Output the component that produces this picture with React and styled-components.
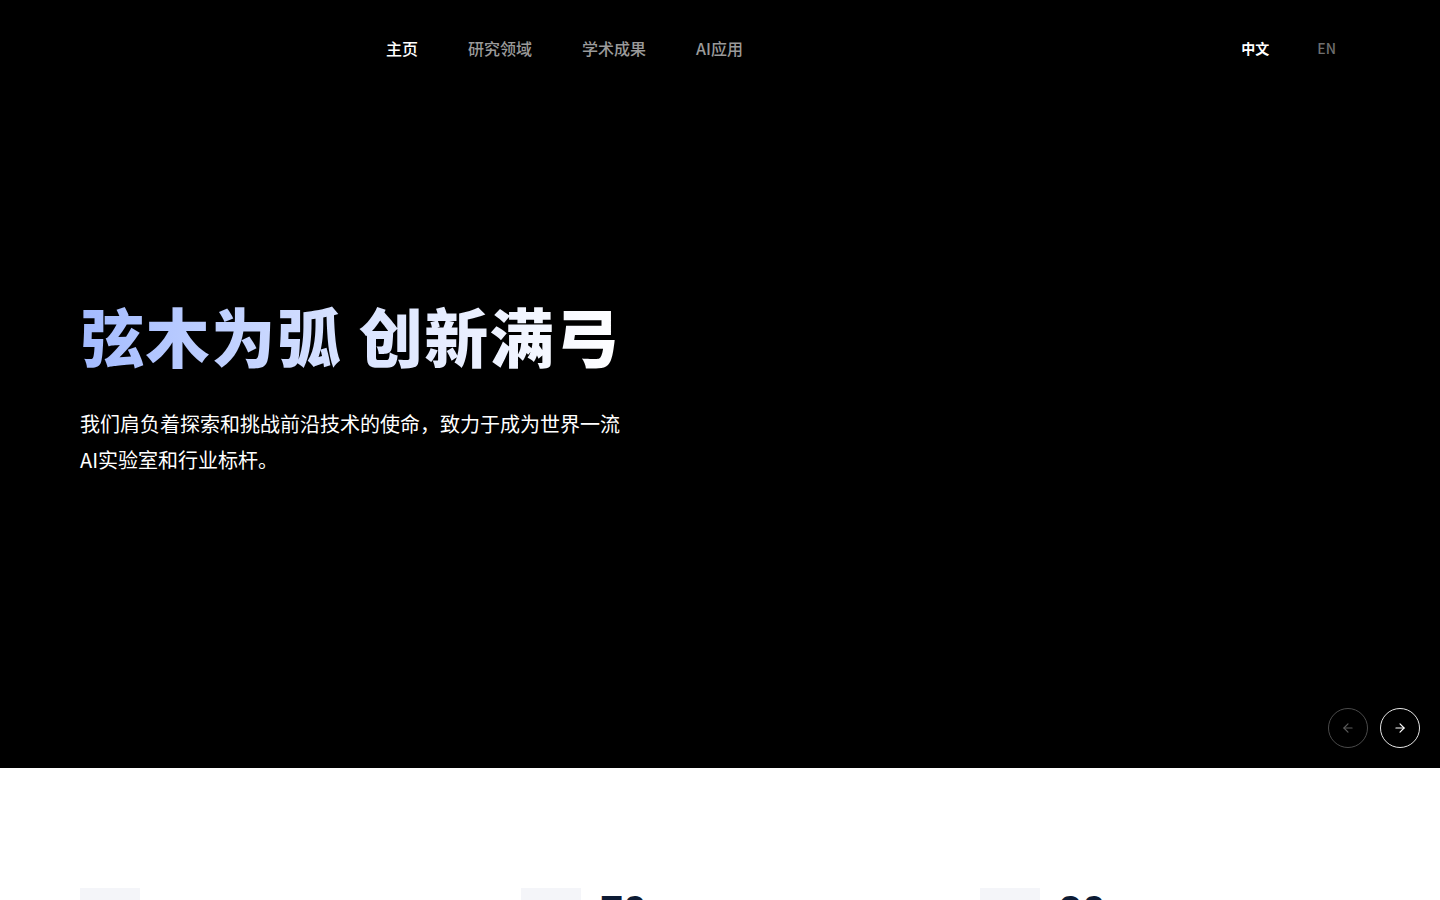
import React from "react";
import styled, { createGlobalStyle } from "styled-components";

const GlobalStyle = createGlobalStyle`
  * { box-sizing: border-box; }
  body {
    margin: 0;
    background: #fff;
    font-family: "Noto Sans CJK SC", "Noto Sans", "Liberation Sans", sans-serif;
  }
`;

const Hero = styled.section`
  position: relative;
  height: 768px;
  background: #000;
  display: flex;
  flex-direction: column;
`;

const Header = styled.header`
  height: 95px;
  display: flex;
  align-items: center;
  padding: 0 104px 0 386px;
`;

const Nav = styled.nav`
  display: flex;
  gap: 50px;
  flex: 1;
`;

const NavItem = styled.a`
  font-size: 16px;
  font-weight: 500;
  color: ${(p) => (p.$active ? "#fff" : "#9a9a9a")};
  text-decoration: none;
  cursor: pointer;
`;

const Langs = styled.div`
  display: flex;
  gap: 48px;
`;

const Lang = styled.span`
  font-size: 14px;
  font-weight: ${(p) => (p.$active ? 700 : 500)};
  color: ${(p) => (p.$active ? "#fff" : "#6f6f6f")};
  cursor: pointer;
`;

const Content = styled.div`
  padding: 201px 80px 0;
  flex: 1;
`;

const Title = styled.h1`
  margin: 0;
  display: inline-block;
  font-size: 64px;
  line-height: 77px;
  font-weight: 900;
  letter-spacing: 1.6px;
  background: linear-gradient(90deg, #a3bbff 0%, #d9e3ff 50%, #ffffff 100%);
  -webkit-background-clip: text;
  background-clip: text;
  color: transparent;
`;

const Subtitle = styled.p`
  margin: 33px 0 0;
  max-width: 550px;
  font-size: 20px;
  line-height: 36px;
  color: #fff;
`;

const Arrows = styled.div`
  position: absolute;
  right: 20px;
  bottom: 20px;
  display: flex;
  gap: 12px;
`;

const ArrowButton = styled.button`
  width: 40px;
  height: 40px;
  border-radius: 50%;
  background: transparent;
  border: 1px solid ${(p) => (p.$enabled ? "#e6e6e6" : "#4a4a4a")};
  color: ${(p) => (p.$enabled ? "#fff" : "#5c5c5c")};
  display: flex;
  align-items: center;
  justify-content: center;
  padding: 0;
  cursor: pointer;
`;

const Stats = styled.section`
  padding: 120px 80px 120px;
  display: grid;
  grid-template-columns: 441px 459px 1fr;
`;

const Stat = styled.div`
  display: flex;
  align-items: flex-start;
  gap: 19px;
`;

const StatIcon = styled.div`
  width: 60px;
  height: 60px;
  flex-shrink: 0;
  background: #f4f5f9;
`;

const StatText = styled.div`
  display: flex;
  flex-direction: column;
`;

const StatNumber = styled.span`
  font-family: "Liberation Sans", "Noto Sans", sans-serif;
  font-size: 42px;
  line-height: 46px;
  font-weight: 700;
  color: #0d1b34;
  min-height: 46px;
`;

const StatLabel = styled.span`
  font-size: 14px;
  color: #666;
  margin-top: 8px;
`;

const Arrow = ({ dir }) => (
  <svg width="14" height="14" viewBox="0 0 24 24" fill="none" stroke="currentColor" strokeWidth="2" strokeLinecap="round" strokeLinejoin="round">
    {dir === "left" ? (
      <>
        <path d="M19 12H5" />
        <path d="M12 19l-7-7 7-7" />
      </>
    ) : (
      <>
        <path d="M5 12h14" />
        <path d="M12 5l7 7-7 7" />
      </>
    )}
  </svg>
);

const navItems = ["主页", "研究领域", "学术成果", "AI应用"];

const stats = [
  { number: "", label: "研究方向" },
  { number: "70", label: "学术论文" },
  { number: "90", label: "AI应用" },
];

const App = () => {
  return (
    <>
      <GlobalStyle />
      <Hero>
        <Header>
          <Nav>
            {navItems.map((item, i) => (
              <NavItem key={item} $active={i === 0}>
                {item}
              </NavItem>
            ))}
          </Nav>
          <Langs>
            <Lang $active>中文</Lang>
            <Lang>EN</Lang>
          </Langs>
        </Header>
        <Content>
          <Title>弦木为弧 创新满弓</Title>
          <Subtitle>
            我们肩负着探索和挑战前沿技术的使命，致力于成为世界一流AI实验室和行业标杆。
          </Subtitle>
        </Content>
        <Arrows>
          <ArrowButton>
            <Arrow dir="left" />
          </ArrowButton>
          <ArrowButton $enabled>
            <Arrow dir="right" />
          </ArrowButton>
        </Arrows>
      </Hero>
      <Stats>
        {stats.map((s) => (
          <Stat key={s.label}>
            <StatIcon />
            <StatText>
              <StatNumber>{s.number}</StatNumber>
              <StatLabel>{s.label}</StatLabel>
            </StatText>
          </Stat>
        ))}
      </Stats>
    </>
  );
};

export default App;
